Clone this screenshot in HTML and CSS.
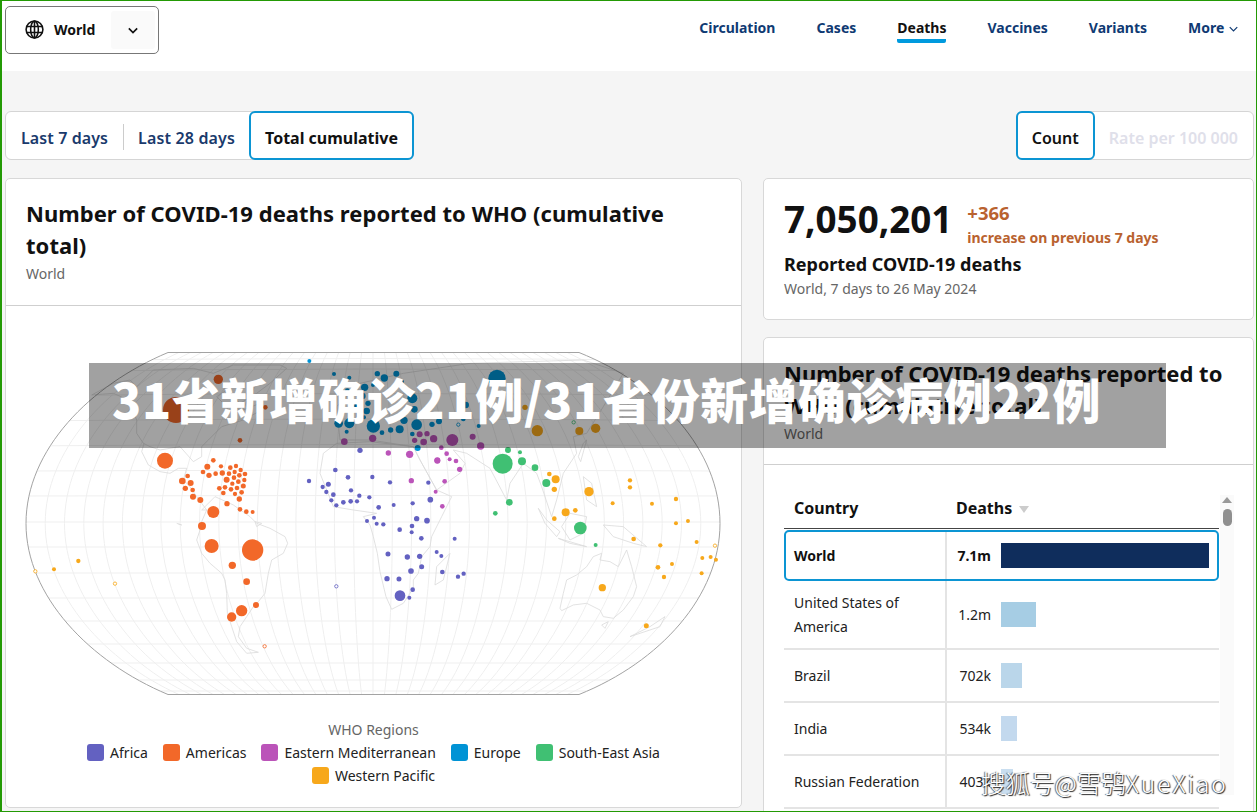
FILE: index.html
```html
<!DOCTYPE html>
<html lang="en">
<head>
<meta charset="utf-8">
<title>WHO COVID-19 dashboard</title>
<link rel="stylesheet" href="styles.css">
</head>
<body>
<div class="page">
  <header class="topbar">
    <div class="selector">
      <div class="selector-label">
        <svg class="globe" viewBox="0 0 24 24" width="21" height="21"><circle cx="12" cy="12" r="9.6"/><ellipse cx="12" cy="12" rx="4.4" ry="9.6"/><path d="M2.6 8.6h18.8M2.6 15.4h18.8M12 2.4v19.2"/></svg>
        <span>World</span>
      </div>
      <div class="selector-arrow"><svg viewBox="0 0 12 8" width="10" height="7"><path d="M1 1.5l5 5 5-5"/></svg></div>
    </div>
    <nav class="nav">
      <a>Circulation</a><a>Cases</a><a class="active">Deaths</a><a>Vaccines</a><a>Variants</a>
      <a class="more">More <svg viewBox="0 0 12 8" width="9" height="6"><path d="M1 1.5l5 5 5-5"/></svg></a>
    </nav>
  </header>

  <main class="content">
    <div class="toolbar">
      <div class="toggle">
        <span class="opt first">Last 7 days</span><span class="sep"></span><span class="opt second">Last 28 days</span><span class="opt selected total">Total cumulative</span>
      </div>
      <div class="toggle">
        <span class="opt selected count">Count</span><span class="opt disabled">Rate per 100 000</span>
      </div>
    </div>

    <div class="columns">
      <section class="card map-card">
        <div class="card-head">
          <h2>Number of COVID-19 deaths reported to WHO (cumulative total)</h2>
          <p class="sub">World</p>
        </div>
        <svg class="map" viewBox="6 306 735 410" width="735" height="410">
          <defs>
            <g id="meridians">
              <path d="M11.4-171C15.7-138 19.3-72 19.3 0S15.7 138 11.4 171"/>
              <path d="M22.8-171C31.4-138 38.6-72 38.6 0S31.4 138 22.8 171"/>
              <path d="M34.3-171C47.2-138 57.8-72 57.8 0S47.2 138 34.3 171"/>
              <path d="M45.7-171C62.9-138 77.1-72 77.1 0S62.9 138 45.7 171"/>
              <path d="M57.1-171C78.6-138 96.4-72 96.4 0S78.6 138 57.1 171"/>
              <path d="M68.5-171C94.3-138 115.7-72 115.7 0S94.3 138 68.5 171"/>
              <path d="M79.9-171C110-138 135-72 135 0S110 138 79.9 171"/>
              <path d="M91.4-171C125.8-138 154.2-72 154.2 0S125.8 138 91.4 171"/>
              <path d="M102.8-171C141.5-138 173.5-72 173.5 0S141.5 138 102.8 171"/>
              <path d="M114.2-171C157.2-138 192.8-72 192.8 0S157.2 138 114.2 171"/>
              <path d="M125.6-171C172.9-138 212.1-72 212.1 0S172.9 138 125.6 171"/>
              <path d="M137-171C188.6-138 231.4-72 231.4 0S188.6 138 137 171"/>
              <path d="M148.5-171C204.4-138 250.6-72 250.6 0S204.4 138 148.5 171"/>
              <path d="M159.9-171C220.1-138 269.9-72 269.9 0S220.1 138 159.9 171"/>
              <path d="M171.3-171C235.8-138 289.2-72 289.2 0S235.8 138 171.3 171"/>
              <path d="M182.7-171C251.5-138 308.5-72 308.5 0S251.5 138 182.7 171"/>
              <path d="M194.1-171C267.2-138 327.8-72 327.8 0S267.2 138 194.1 171"/>
            </g>
            <clipPath id="globe-clip"><path d="M168 352.5H579C660 385 720 450 720 523.5C720 596 660 662 579 694.5H168C90 662 26 596 26 523.5C26 450 90 385 168 352.5Z"/></clipPath>
          </defs>
          <g class="grid" clip-path="url(#globe-clip)">
            <path d="M20 361Q373 356 730 361M20 372Q373 366 730 372M20 396Q373 391 730 396M20 421Q373 417 730 421M20 446Q373 443 730 446M20 471Q373 469 730 471M20 496Q373 495 730 496M20 522H730M20 547H730M20 573H730M20 598H730M20 621H730M20 644H730M20 663H730M20 680H730M20 691H730"/>
            <g transform="translate(373 523.5)"><path d="M0-171V171"/><use href="#meridians"/><use href="#meridians" transform="scale(-1 1)"/></g>
          </g>
          <g class="land" transform="translate(370 340) scale(.3333)">
            <path d="M-835 165L-770 130L-720 120L-700 140L-650 90L-530 85L-470 100L-410 75L-270 75L-250 85L-300 130L-340 160L-390 190L-430 150L-460 170L-430 200L-380 210L-330 190L-325 210L-380 240L-445 260L-485 300L-505 320L-505 350L-530 365L-570 320L-600 325L-630 330L-660 320L-680 310L-700 280L-700 240L-725 180L-770 160Z"/>
            <path d="M-678 310L-685 335L-665 375L-630 395L-600 400L-575 385L-550 385L-560 420L-540 440L-520 470L-505 490"/>
            <path d="M-505 490L-490 510L-505 510L-465 470L-410 495L-360 530L-340 550L-300 565L-255 590L-247 610L-260 640L-295 660L-305 700L-315 760L-335 785L-350 800L-370 830L-390 860L-395 890L-370 925L-335 937L-370 940L-400 905L-415 860L-428 820L-430 760L-435 720L-445 700L-480 670L-505 640L-520 600L-510 570L-505 545L-490 510"/>
            <path d="M-140 340L-150 400L-110 500L-50 510L20 520L-20 530L0 555L10 590L22 640L30 695L48 770L65 808L100 790L130 745L130 720L145 700L155 650L180 620L185 590L215 530L235 490L245 470L200 450L150 360L130 320L0 305L-100 310Z"/>
            <path d="M130 320L150 360L200 450L270 400L285 370L250 330L290 340L360 385L410 480L420 430L460 370L500 400L515 440L545 530L560 480L580 400L620 340L610 290L650 280L700 200L760 100L640 60L300 70L100 100L-30 130L-100 200L-90 300L0 300Z"/>
            <path d="M505 505L530 540L570 575L560 590L525 550ZM565 595L650 620L600 610ZM575 560L600 520L650 530L640 580L600 600ZM640 410L665 430L680 500L650 480ZM700 555L760 560L830 620L790 610L730 590ZM625 350L640 310L650 300L632 365Z"/>
            <path d="M570 805L580 760L590 720L620 705L650 680L670 650L695 640L690 660L720 665L745 680L770 630L785 680L800 740L790 770L760 810L730 835L700 830L690 810L650 790L610 795L575 812ZM780 890L840 860L885 830L870 860ZM240 640L220 720L195 735L200 680ZM695 855L715 845L705 865Z"/>
            <path d="M-325 550L-340 560L-345 545Z M-580 550L-565 555L-575 552"/>
          </g>
          <path class="frame" d="M168 352.5H579C660 385 720 450 720 523.5C720 596 660 662 579 694.5H168C90 662 26 596 26 523.5C26 450 90 385 168 352.5Z"/>

          <g class="dots afr" transform="translate(370 340) scale(.3333)">
            <circle cx="7" cy="411" r="6.5"/><circle cx="60" cy="427" r="6.5"/><circle cx="175" cy="428" r="6.5"/><circle cx="181" cy="479" r="8.5"/><circle cx="128" cy="490" r="6.5"/><circle cx="71" cy="495" r="6"/><circle cx="26" cy="502" r="7"/><circle cx="-2" cy="472" r="6.5"/><circle cx="12" cy="533" r="6"/><circle cx="20" cy="551" r="6"/><circle cx="40" cy="553" r="6.5"/><circle cx="89" cy="569" r="7"/><circle cx="126" cy="558" r="7"/><circle cx="125" cy="577" r="6"/><circle cx="140" cy="536" r="8"/><circle cx="171" cy="542" r="8.5"/><circle cx="154" cy="595" r="7"/><circle cx="254" cy="596" r="6"/><circle cx="54" cy="642" r="7.5"/><circle cx="112" cy="651" r="8"/><circle cx="149" cy="649" r="8"/><circle cx="200" cy="636" r="6"/><circle cx="214" cy="648" r="6"/><circle cx="155" cy="680" r="7.5"/><circle cx="123" cy="693" r="8.5"/><circle cx="217" cy="696" r="7"/><circle cx="51" cy="716" r="8"/><circle cx="87" cy="717" r="7.5"/><circle cx="264" cy="710" r="6.5"/><circle cx="281" cy="701" r="6.5"/><circle cx="128" cy="749" r="7"/><circle cx="90" cy="767" r="16"/><circle cx="118" cy="773" r="6"/>
            <circle cx="-30" cy="331" r="8"/><circle cx="-104" cy="390" r="7"/><circle cx="-66" cy="412" r="7"/><circle cx="-183" cy="423" r="6.5"/><circle cx="-125" cy="433" r="7.5"/><circle cx="-142" cy="441" r="6.5"/><circle cx="-131" cy="456" r="6.5"/><circle cx="-110" cy="464" r="7"/><circle cx="-116" cy="481" r="6.5"/><circle cx="-101" cy="496" r="6.5"/><circle cx="-80" cy="487" r="7"/><circle cx="-58" cy="484" r="7"/><circle cx="-39" cy="484" r="6.5"/><circle cx="-57" cy="451" r="6.5"/><circle cx="-32" cy="467" r="6.5"/><circle cx="-9" cy="543" r="6"/>
            <circle class="hollow" cx="-101" cy="739" r="5"/>
          </g>

          <g class="dots amr" transform="translate(20 340) scale(.3333)">
            <circle cx="435" cy="362" r="24"/><circle cx="580" cy="361" r="7"/><circle cx="562" cy="380" r="9"/><circle cx="603" cy="379" r="6.5"/><circle cx="631" cy="383" r="7"/><circle cx="648" cy="378" r="6.5"/><circle cx="662" cy="390" r="6.5"/><circle cx="675" cy="402" r="7"/><circle cx="549" cy="396" r="7"/><circle cx="567" cy="406" r="8"/><circle cx="587" cy="401" r="7"/><circle cx="607" cy="399" r="8"/><circle cx="627" cy="401" r="7"/><circle cx="644" cy="396" r="6.5"/><circle cx="658" cy="406" r="7"/><circle cx="642" cy="413" r="7"/><circle cx="673" cy="420" r="6.5"/><circle cx="620" cy="419" r="9"/><circle cx="655" cy="425" r="7"/><circle cx="637" cy="431" r="6.5"/><circle cx="670" cy="438" r="7.5"/><circle cx="651" cy="444" r="7"/><circle cx="633" cy="448" r="7"/><circle cx="615" cy="442" r="7"/><circle cx="598" cy="445" r="7"/><circle cx="665" cy="457" r="7"/><circle cx="645" cy="462" r="6.5"/><circle cx="610" cy="459" r="7"/><circle cx="658" cy="477" r="8"/><circle cx="503" cy="408" r="7"/><circle cx="487" cy="423" r="10"/><circle cx="512" cy="429" r="9"/><circle cx="496" cy="445" r="8"/><circle cx="518" cy="450" r="7"/><circle cx="519" cy="470" r="9"/><circle cx="541" cy="480" r="9"/><circle cx="621" cy="491" r="8"/><circle cx="580" cy="516" r="18"/><circle cx="660" cy="508" r="7"/><circle cx="679" cy="515" r="7"/><circle cx="698" cy="516" r="6"/><circle cx="546" cy="558" r="12"/><circle cx="575" cy="618" r="21"/><circle cx="698" cy="630" r="32"/><circle cx="637" cy="676" r="11"/><circle cx="680" cy="725" r="10"/><circle cx="708" cy="795" r="9"/><circle cx="665" cy="812" r="17"/><circle cx="635" cy="831" r="14"/>
            <circle cx="595" cy="118" r="14"/><circle cx="468" cy="210" r="39"/><circle cx="736" cy="202" r="7"/><circle cx="660" cy="301" r="7"/>
            <circle class="hollow" cx="734" cy="919" r="5"/>
          </g>

          <g class="dots eur" transform="translate(290 345) scale(.3333)">
            <circle cx="58" cy="48" r="6"/><circle cx="132" cy="87" r="6"/><circle cx="178" cy="98" r="6"/><circle cx="262" cy="86" r="8"/><circle cx="283" cy="99" r="11"/><circle cx="319" cy="86" r="9"/><circle cx="335" cy="110" r="7"/><circle cx="224" cy="127" r="11"/><circle cx="249" cy="120" r="6"/><circle cx="172" cy="137" r="7"/><circle cx="217" cy="153" r="10"/><circle cx="234" cy="175" r="8"/><circle cx="230" cy="198" r="10"/><circle cx="197" cy="183" r="6"/><circle cx="222" cy="217" r="6"/><circle cx="146" cy="235" r="13"/><circle cx="178" cy="235" r="15"/><circle cx="170" cy="260" r="6"/><circle cx="250" cy="243" r="20"/><circle cx="276" cy="263" r="7"/><circle cx="302" cy="255" r="8"/><circle cx="329" cy="253" r="12"/><circle cx="342" cy="226" r="11"/><circle cx="380" cy="239" r="16"/><circle cx="367" cy="160" r="15"/><circle cx="373" cy="193" r="10"/><circle cx="426" cy="238" r="8"/><circle cx="447" cy="229" r="9"/><circle cx="367" cy="267" r="7"/><circle cx="566" cy="243" r="6"/><circle cx="621" cy="100" r="26"/><circle cx="520" cy="222" r="7"/><circle cx="527" cy="180" r="10"/><circle cx="383" cy="309" r="9"/>
            <circle class="hollow" cx="505" cy="239" r="5"/>
          </g>

          <g class="dots emr" transform="translate(290 345) scale(.3333)">
            <circle cx="163" cy="290" r="10"/><circle cx="248" cy="280" r="11"/><circle cx="389" cy="268" r="9"/><circle cx="411" cy="266" r="8"/><circle cx="374" cy="286" r="8"/><circle cx="401" cy="291" r="10"/><circle cx="431" cy="281" r="11"/><circle cx="487" cy="285" r="18"/><circle cx="548" cy="275" r="9"/><circle cx="572" cy="303" r="11"/><circle cx="295" cy="324" r="8"/><circle cx="359" cy="328" r="11"/><circle cx="442" cy="346" r="9"/><circle cx="454" cy="308" r="7"/><circle cx="470" cy="326" r="7"/><circle cx="479" cy="343" r="6"/><circle cx="498" cy="348" r="7"/>
          </g>
          <g class="dots emr" transform="translate(370 340) scale(.3333)">
            <circle cx="202" cy="362" r="9"/><circle cx="269" cy="388" r="8"/><circle cx="124" cy="422" r="8"/><circle cx="224" cy="424" r="7"/><circle cx="197" cy="455" r="6"/><circle cx="217" cy="499" r="7"/>
          </g>

          <g class="dots sear" transform="translate(370 340) scale(.3333)">
            <circle cx="414" cy="330" r="9"/><circle cx="450" cy="337" r="6"/><circle cx="398" cy="371" r="30"/><circle cx="456" cy="364" r="12"/><circle cx="495" cy="383" r="10"/><circle cx="529" cy="429" r="12"/><circle cx="418" cy="487" r="10"/><circle cx="376" cy="520" r="7"/><circle cx="631" cy="564" r="19"/><circle cx="677" cy="615" r="6"/>
            <circle class="hollow" cx="611" cy="247" r="5"/>
          </g>

          <g class="dots wpr" transform="translate(370 340) scale(.3333)">
            <circle cx="465" cy="202" r="8"/><circle cx="502" cy="272" r="17"/><circle cx="628" cy="273" r="12"/><circle cx="677" cy="265" r="14"/><circle cx="538" cy="402" r="7"/><circle cx="557" cy="418" r="12"/><circle cx="553" cy="448" r="8"/><circle cx="657" cy="455" r="14"/><circle cx="587" cy="517" r="12"/><circle cx="616" cy="511" r="7"/><circle cx="553" cy="536" r="7"/><circle cx="780" cy="421" r="6.5"/><circle cx="780" cy="442" r="6.5"/><circle cx="728" cy="490" r="6"/><circle cx="846" cy="491" r="6"/><circle cx="918" cy="477" r="6.5"/><circle cx="954" cy="543" r="6"/><circle cx="918" cy="550" r="6"/><circle cx="980" cy="606" r="6"/><circle cx="791" cy="597" r="7"/><circle cx="871" cy="616" r="6.5"/><circle cx="997" cy="654" r="6"/><circle cx="1022" cy="651" r="6"/><circle cx="1038" cy="659" r="6"/><circle cx="906" cy="672" r="6"/><circle cx="864" cy="682" r="7"/><circle cx="882" cy="711" r="6.5"/><circle cx="995" cy="700" r="6"/><circle cx="697" cy="743" r="11"/><circle cx="829" cy="857" r="7.5"/>
            <circle class="hollow" cx="1035" cy="617" r="5"/>
          </g>
          <g class="dots wpr" transform="translate(20 340) scale(.3333)">
            <circle cx="175" cy="663" r="6.5"/><circle cx="102" cy="688" r="6"/><circle class="hollow" cx="46" cy="694" r="5"/><circle class="hollow" cx="285" cy="731" r="5"/>
          </g>
        </svg>
        <div class="legend">
          <div class="legend-title">WHO Regions</div>
          <div class="legend-items">
            <span class="item"><i class="swatch c-afr"></i>Africa</span>
            <span class="item"><i class="swatch c-amr"></i>Americas</span>
            <span class="item"><i class="swatch c-emr"></i>Eastern Mediterranean</span>
            <span class="item"><i class="swatch c-eur"></i>Europe</span>
            <span class="item"><i class="swatch c-sear"></i>South-East Asia</span>
            <span class="item"><i class="swatch c-wpr"></i>Western Pacific</span>
          </div>
        </div>
      </section>

      <div class="side">
        <section class="card stat-card">
          <div class="stat-line">
            <div class="stat-big">7,050,201</div>
            <div class="stat-change">
              <div class="delta">+366</div>
              <div class="delta-note">increase on previous 7 days</div>
            </div>
          </div>
          <div class="stat-label">Reported COVID-19 deaths</div>
          <p class="sub">World, 7 days to 26 May 2024</p>
        </section>

        <section class="card table-card">
          <div class="card-head">
            <h2>Number of COVID-19 deaths reported to WHO (cumulative total)</h2>
            <p class="sub">World</p>
          </div>
          <div class="table-wrap">
            <div class="table">
              <div class="row head"><div class="c-name">Country</div><div class="c-val">Deaths <i class="sort"></i></div></div>
              <div class="row picked"><div class="c-name">World</div><div class="c-val"><span class="num">7.1m</span><span class="bar bar-world"></span></div></div>
              <div class="row tall"><div class="c-name">United States of America</div><div class="c-val"><span class="num">1.2m</span><span class="bar bar-us"></span></div></div>
              <div class="row"><div class="c-name">Brazil</div><div class="c-val"><span class="num">702k</span><span class="bar bar-br"></span></div></div>
              <div class="row"><div class="c-name">India</div><div class="c-val"><span class="num">534k</span><span class="bar bar-in"></span></div></div>
              <div class="row"><div class="c-name">Russian Federation</div><div class="c-val"><span class="num">403k</span><span class="bar bar-ru"></span></div></div>
            </div>
            <div class="scrollbar"><i class="scroll-up"></i><i class="scroll-thumb"></i></div>
          </div>
        </section>
      </div>
    </div>
  </main>

  <div class="banner">31省新增确诊21例/31省份新增确诊病例22例</div>
  <div class="watermark">搜狐号@雪鸮<span class="wm-latin">XueXiao</span></div>
</div>
</body>
</html>
```
FILE: styles.css
```css
* { box-sizing: border-box; }
html, body { margin: 0; padding: 0; }
body { width: 1257px; height: 812px; overflow: hidden; font-family: "Noto Sans", sans-serif; color: #111; }
.page { position: relative; width: 1257px; height: 812px; overflow: hidden; background: #f5f5f5; border: 1px solid #239a05; border-left-width: 2px; display: flex; flex-direction: column; }

.topbar { height: 70px; flex: none; background: #fff; display: flex; justify-content: space-between; padding: 5px 0 0 3px; }
.selector { width: 154px; height: 48px; border: 1px solid #777; border-radius: 5px; display: flex; align-items: center; background: #fff; }
.selector-label { display: flex; align-items: center; gap: 9px; padding-left: 18px; width: 105px; font-size: 14px; font-weight: 700; line-height: 20px; padding-bottom: 1px; }
.globe { fill: none; stroke: #111; stroke-width: 1.8; flex: none; }
.selector-arrow { width: 44px; height: 38px; background: #fafafa; display: flex; align-items: center; justify-content: center; border-radius: 3px; }
.selector-arrow svg, .more svg { fill: none; stroke: #111; stroke-width: 2; }
.nav { display: flex; gap: 41px; padding: 11px 18px 0 0; height: 42px; font-size: 14px; font-weight: 700; color: #0f3a73; }
.nav a { display: block; height: 26px; line-height: 21px; }
.nav .active { color: #111; border-bottom: 4px solid #009ade; border-radius: 0 0 2px 2px; height: 26px; }
.more svg { stroke: #0f3a73; stroke-width: 1.6; margin-left: 1px; vertical-align: 1px; }

.content { padding: 40px 2px 0 3px; flex: 1; min-height: 0; }
.toolbar { display: flex; justify-content: space-between; height: 49px; }
.toggle { display: flex; align-items: center; background: #fff; border: 1px solid #d5d5d5; border-radius: 6px; height: 49px; font-size: 16px; font-weight: 600; color: #1a3a6c; }
.opt { display: flex; align-items: center; height: 49px; white-space: nowrap; padding-top: 4px; }
.first { padding-left: 15px; padding-right: 15px; letter-spacing: .1px; }
.sep { width: 1px; height: 26px; background: #ccc; margin-top: 2px; }
.second { padding-left: 14px; padding-right: 15px; letter-spacing: .15px; }
.selected { color: #111; background: #fff; border: 2px solid #0c95d3; border-radius: 6px; margin: -1px; font-weight: 700; }
.total { padding-left: 14px; padding-right: 14px; }
.count { padding-left: 14px; padding-right: 14px; font-weight: 600; }
.disabled { color: #dfe0ea; padding-left: 15px; padding-right: 15px; }

.columns { display: grid; grid-template-columns: 737px 491px; gap: 21px; margin-top: 18px; }
.card { background: #fff; border: 1px solid #d8d8d8; border-radius: 5px; }
.card-head { padding: 18px 20px 0; height: 127px; border-bottom: 1px solid #cfcfcf; }
.card h2 { margin: 0; font-size: 22px; line-height: 32px; font-weight: 700; color: #111; }
.map-card h2 { letter-spacing: .04px; }
.sub { margin: 0; font-size: 14px; line-height: 24px; color: #666; }
.card-head .sub { margin-top: 1px; }

.map-card { height: 630px; display: flex; flex-direction: column; }
.map { display: block; flex: none; }
.grid { fill: none; stroke: #efefef; stroke-width: 1; }
.land path { fill: none; stroke: #dadada; stroke-width: 2.4; stroke-linejoin: round; }
.frame { fill: none; stroke: #a3a3a3; stroke-width: 1; }
.dots .hollow { fill: #fff; stroke-width: 2.5; }
.afr { fill: #6361c1; stroke: #6361c1; stroke-width: 0; }
.amr { fill: #f26829; stroke: #f26829; stroke-width: 0; }
.eur { fill: #0093d5; stroke: #0093d5; stroke-width: 0; }
.emr { fill: #bb54b9; stroke: #bb54b9; stroke-width: 0; }
.sear { fill: #40c073; stroke: #40c073; stroke-width: 0; }
.wpr { fill: #f7a81b; stroke: #f7a81b; stroke-width: 0; }

.legend { text-align: center; font-size: 14px; padding: 2px 40px 0; }
.legend-title { color: #666; line-height: 23px; }
.legend-items { display: flex; flex-wrap: wrap; justify-content: center; column-gap: 15px; color: #222; }
.item { display: inline-flex; align-items: center; gap: 6px; height: 23px; }
.swatch { width: 17px; height: 17px; border-radius: 3px; display: block; }
.c-afr { background: #6361c1; }
.c-amr { background: #f26829; }
.c-emr { background: #bb54b9; }
.c-eur { background: #0093d5; }
.c-sear { background: #40c073; }
.c-wpr { background: #f7a81b; }

.side { display: flex; flex-direction: column; gap: 17px; }
.stat-card { height: 142px; padding: 15px 20px 0; }
.stat-line { display: flex; gap: 15px; }
.stat-big { font-size: 36.8px; line-height: 50px; font-weight: 700; color: #111; }
.stat-change { color: #b9622f; font-weight: 700; }
.delta { font-size: 18.5px; line-height: 24px; padding-top: 7px; }
.delta-note { font-size: 14px; line-height: 25px; }
.stat-label { font-size: 18px; line-height: 26px; font-weight: 700; margin-top: 1px; }
.stat-card .sub { margin-top: 0; }

.table-card { height: 480px; overflow: hidden; }
.table-card .card-head { padding-top: 19px; }
.table-wrap { display: flex; padding: 22px 0 0 20px; }
.table { width: 435px; font-size: 14px; color: #222; }
.row { display: flex; height: 53px; border-bottom: 2px solid #e4e4e4; }
.row.tall { height: 69px; }
.c-name { width: 163px; padding: 0 10px; display: flex; align-items: center; line-height: 24px; border-right: 2px solid #e4e4e4; }
.c-val { flex: 1; display: flex; align-items: center; padding-left: 0; }
.num { width: 44px; text-align: right; margin-right: 10px; white-space: nowrap; }
.bar { display: block; height: 25px; }
.bar-world { width: 208px; background: #0f2d5c; }
.bar-us { width: 35px; background: #a6cde4; }
.bar-br { width: 21px; background: #bad6ea; }
.bar-in { width: 16px; background: #c3d9ee; }
.bar-ru { width: 12px; background: #c9def0; }
.row.head { height: 42px; border-bottom: 1px solid #444; font-size: 16px; font-weight: 700; color: #111; }
.head .c-name { border-right: 0; }
.head .c-val { padding-left: 9px; }
.sort { display: block; width: 0; height: 0; margin: 3px 0 0 7px; border: 5px solid transparent; border-top: 7px solid #ccc; border-bottom: 0; }
.picked { height: 51px; margin-top: 1px; border: 2px solid #0c95d3; border-radius: 5px; font-weight: 700; color: #111; }
.picked .c-name { width: 161px; padding-left: 8px; }
.scrollbar { width: 14px; margin: 8px 0 0 1px; background: #fafafa; height: 300px; display: flex; flex-direction: column; align-items: center; }
.scroll-up { display: block; width: 0; height: 0; margin-top: 2px; border: 5px solid transparent; border-bottom: 6px solid #999; border-top: 0; }
.scroll-thumb { display: block; width: 9px; height: 17px; margin-top: 6px; background: #8f8f8f; border-radius: 5px; }

.banner { position: absolute; left: 87px; top: 362px; width: 1077px; height: 85px; background: rgba(0, 0, 0, .37); color: #fff; font-family: "Noto Sans CJK SC", sans-serif; font-weight: 900; font-size: 48px; line-height: 70px; letter-spacing: .7px; padding-left: 23px; white-space: nowrap; }
.watermark { position: absolute; left: 979px; top: 764px; font-family: "Noto Sans CJK SC", sans-serif; font-weight: 300; font-size: 24.5px; line-height: 36px; color: #fff; white-space: nowrap; text-shadow: 1px 1px 1px #222, -1px 0 1px #555; }
.wm-latin { letter-spacing: 2px; }
```
